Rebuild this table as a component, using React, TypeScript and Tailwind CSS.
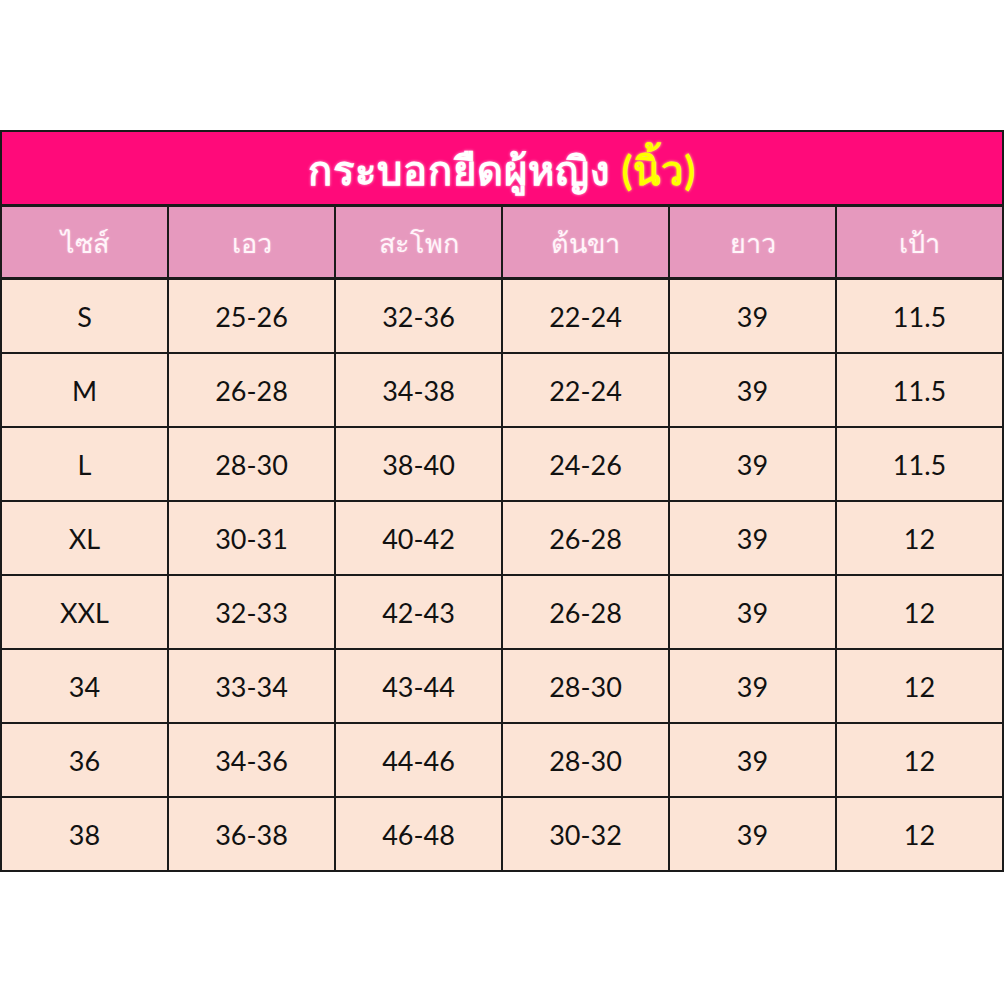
const headers = ["ไซส์", "เอว", "สะโพก", "ต้นขา", "ยาว", "เป้า"];

const rows = [
  ["S", "25-26", "32-36", "22-24", "39", "11.5"],
  ["M", "26-28", "34-38", "22-24", "39", "11.5"],
  ["L", "28-30", "38-40", "24-26", "39", "11.5"],
  ["XL", "30-31", "40-42", "26-28", "39", "12"],
  ["XXL", "32-33", "42-43", "26-28", "39", "12"],
  ["34", "33-34", "43-44", "28-30", "39", "12"],
  ["36", "34-36", "44-46", "28-30", "39", "12"],
  ["38", "36-38", "46-48", "30-32", "39", "12"],
];

const App = () => (
  <div className="h-[1004px] w-[1004px] bg-white pt-[130px] font-['Lato','Noto_Sans',sans-serif]">
    <div className="w-[1004px] border-l-2 border-t-2 border-[#1a1a1a]">
      <div className="flex h-[75px] items-center justify-center border-b-[3px] border-r-2 border-[#1a1a1a] bg-[#ff0a7a] pt-[4px]">
        <h1 className="text-[40px] font-bold tracking-[1px] text-white [text-shadow:0_0_3px_#ffb3d6]">
          กระบอกยืดผู้หญิง <span className="text-[#ffff00] [text-shadow:0_0_3px_#ffe680]">(นิ้ว)</span>
        </h1>
      </div>
      <div className="grid h-[73px] grid-cols-6 border-b-[3px] border-[#1a1a1a] bg-[#e699be]">
        {headers.map((h) => (
          <div
            key={h}
            className="flex items-center justify-center border-r-2 border-[#1a1a1a] pt-[3px] text-[27px] text-[#fff5fa] [text-shadow:0_0_2px_#f8c8dd]"
          >
            {h}
          </div>
        ))}
      </div>
      {rows.map((r, i) => (
        <div
          key={i}
          className="grid h-[74px] grid-cols-6 border-b-2 border-[#1a1a1a] bg-[#fce4d6]"
        >
          {r.map((c, j) => (
            <div
              key={j}
              className="flex items-center justify-center border-r-2 border-[#1a1a1a] pt-[3px] text-[27px] text-[#111]"
            >
              {c}
            </div>
          ))}
        </div>
      ))}
    </div>
  </div>
);

export default App;
